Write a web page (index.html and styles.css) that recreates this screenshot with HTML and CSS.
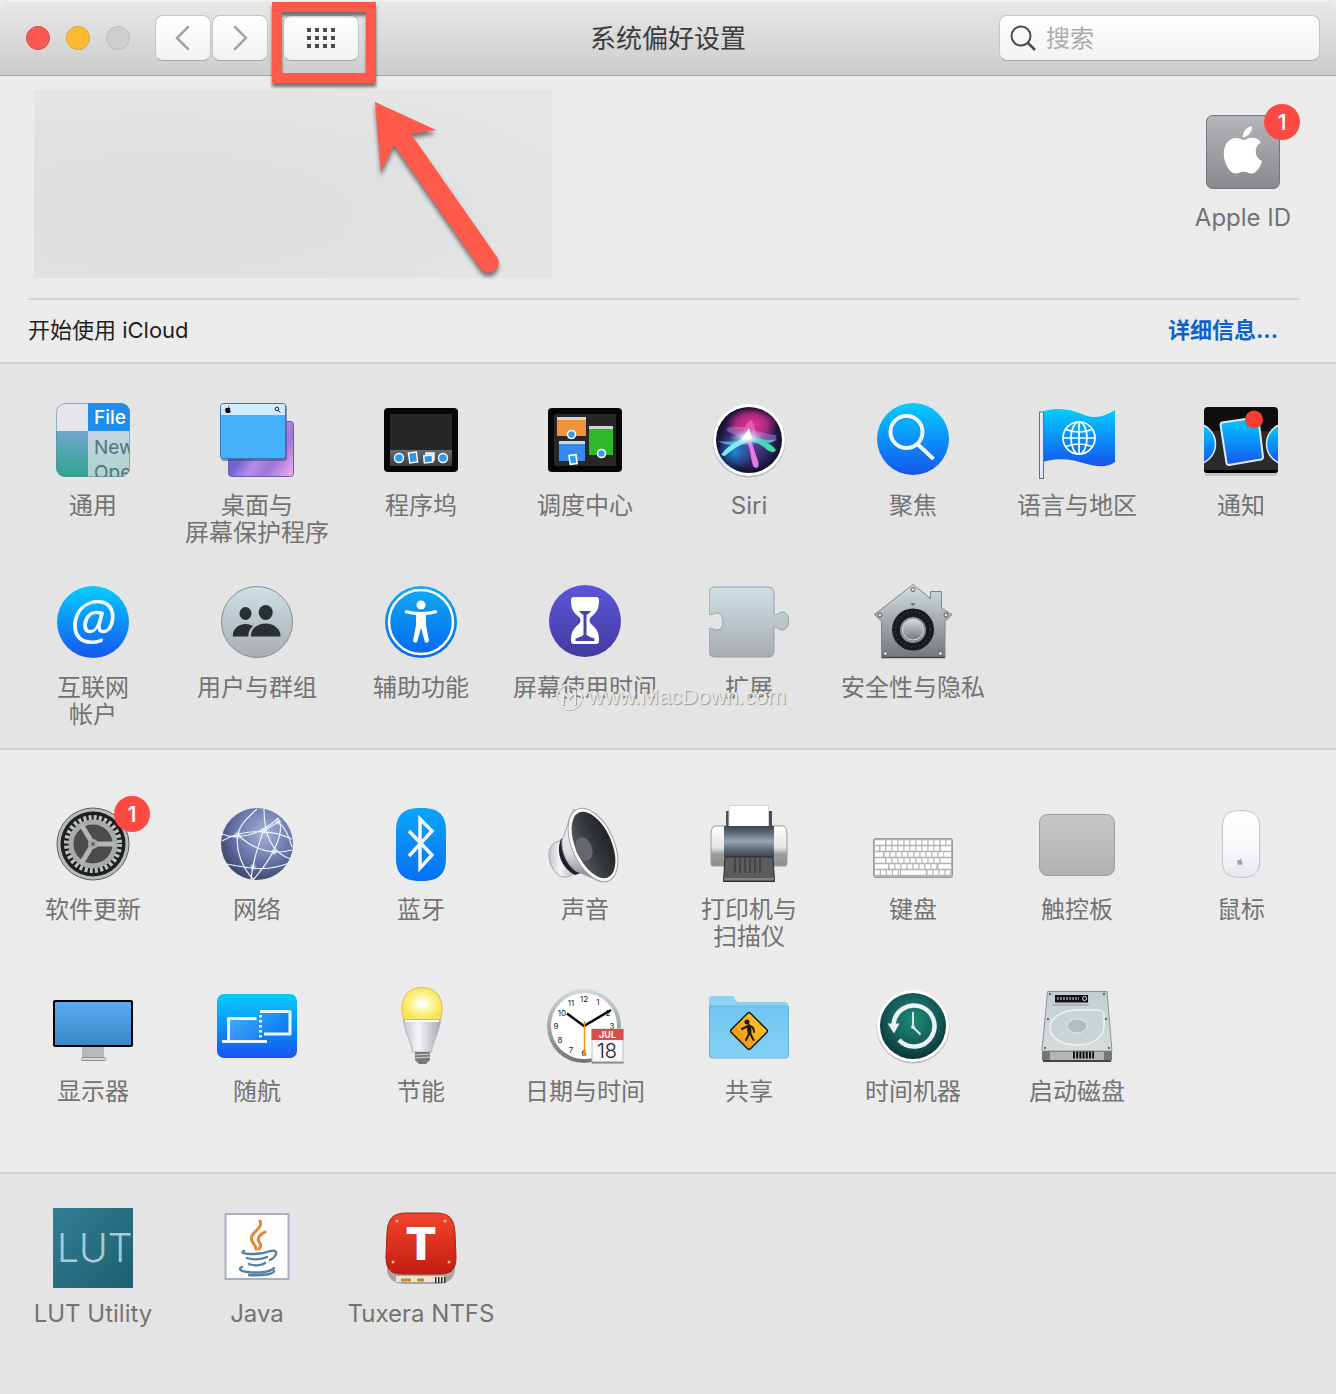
FILE: index.html
```html
<!DOCTYPE html>
<html lang="zh-CN">
<head>
    <meta charset="UTF-8">
    <meta name="viewport" content="width=device-width, initial-scale=1.0">
    <title>系统偏好设置</title>
    <link rel="stylesheet" href="styles.css">
</head>
<body>

    <!-- Shared gradients and symbols -->
    <svg class="defs" aria-hidden="true">
        <defs>
            <linearGradient id="blue" x1="0" y1="0" x2="0" y2="1">
                <stop offset="0" stop-color="#06cdfb"/>
                <stop offset="0.55" stop-color="#0b8cf8"/>
                <stop offset="1" stop-color="#1754ee"/>
            </linearGradient>
            <linearGradient id="silver" x1="0" y1="0" x2="0" y2="1">
                <stop offset="0" stop-color="#cfdfe4"/>
                <stop offset="1" stop-color="#a8adb0"/>
            </linearGradient>
            <linearGradient id="steel" x1="0" y1="0" x2="0" y2="1">
                <stop offset="0" stop-color="#d3dee1"/>
                <stop offset="1" stop-color="#757779"/>
            </linearGradient>
            <linearGradient id="white" x1="0" y1="0" x2="0" y2="1">
                <stop offset="0" stop-color="#ffffff"/>
                <stop offset="0.6" stop-color="#f8f8fc"/>
                <stop offset="1" stop-color="#e6e7ef"/>
            </linearGradient>
            <linearGradient id="sideGrey" x1="0" y1="0" x2="1" y2="0">
                <stop offset="0" stop-color="#c3c4cb"/>
                <stop offset="0.4" stop-color="#f4f5f8"/>
                <stop offset="1" stop-color="#a9aab1"/>
            </linearGradient>
            <symbol id="apple" viewBox="0 0 24 30">
                <path d="M17.6 0.2C17.8 3.9 15 7 11.9 7 11.7 3.6 14.5 0.6 17.6 0.2zM12.2 8.7C13.7 8.7 15.3 7.2 17.9 7.3 20.2 7.4 22.1 8.5 23.2 10.1 18.6 12.8 18.9 19.6 24 22 22.8 25.3 20.3 29.7 17.5 29.7 15.7 29.7 14.8 28.6 12.4 28.6 10 28.6 9.2 29.7 7.4 29.7 3.7 29.7 0 23.2 0 17.2 0 11 3.9 7.5 7.6 7.5 9.6 7.5 11.2 8.7 12.2 8.7z"/>
            </symbol>
        </defs>
    </svg>

    <header class="titlebar">
        <div class="titlebar-left">
            <div class="lights">
                <button class="light light-close" aria-label="关闭"></button>
                <button class="light light-min" aria-label="最小化"></button>
                <button class="light light-zoom" aria-label="缩放" disabled></button>
            </div>
            <nav class="tools">
                <button class="tool" aria-label="后退">
                    <svg width="20" height="28" viewBox="0 0 20 28"><path d="M15 3L4 14l11 11" fill="none" stroke="#a3a3a3" stroke-width="2.5" stroke-linecap="round"/></svg>
                </button>
                <button class="tool" aria-label="前进">
                    <svg width="20" height="28" viewBox="0 0 20 28"><path d="M5 3l11 11L5 25" fill="none" stroke="#a3a3a3" stroke-width="2.5" stroke-linecap="round"/></svg>
                </button>
            </nav>
            <button class="tool tool-all" aria-label="显示全部">
                <svg width="28" height="22" viewBox="0 0 28 22"><path d="M0 3h28M0 11h28M0 19h28" fill="none" stroke="#4b4b4b" stroke-width="4" stroke-dasharray="4 4"/></svg>
            </button>
        </div>
        <h1 class="title">系统偏好设置</h1>
        <label class="search">
            <svg width="26" height="26" viewBox="0 0 26 26"><circle cx="11" cy="11" r="9.5" fill="none" stroke="#4c4c4c" stroke-width="2"/><path d="M18 18l7 7" stroke="#4c4c4c" stroke-width="2.5"/></svg>
            <input type="search" placeholder="搜索" aria-label="搜索">
        </label>
    </header>

    <main>
        <section class="account">
            <div class="account-top">
                <div class="profile"></div>
                <a class="pref" href="#">
                    <span class="icon">
                        <svg viewBox="0 0 80 80">
                            <linearGradient id="idGrey" x1="0" y1="0" x2="0" y2="1"><stop offset="0" stop-color="#b5b6ba"/><stop offset="1" stop-color="#89888d"/></linearGradient>
                            <rect x="3.5" y="3.5" width="73" height="73" rx="6" fill="url(#idGrey)" stroke="#77777b"/>
                            <use href="#apple" x="20" y="14" width="40" height="48" fill="#fff"/>
                        </svg>
                        <span class="badge">1</span>
                    </span>
                    <span class="label">Apple ID</span>
                </a>
            </div>
            <div class="icloud">
                <span>开始使用 iCloud</span>
                <a class="details" href="#">详细信息...</a>
            </div>
        </section>

        <section class="group group-personal">
            <a class="pref" href="#">
                <span class="icon">
                    <svg viewBox="0 0 80 80">
                        <clipPath id="genClip"><rect x="3" y="3" width="74" height="74" rx="9"/></clipPath>
                        <linearGradient id="genTeal" x1="0" y1="0" x2="0" y2="1"><stop offset="0" stop-color="#72a4ce"/><stop offset="1" stop-color="#2ca68c"/></linearGradient>
                        <linearGradient id="genMenu" x1="0" y1="0" x2="0" y2="1"><stop offset="0" stop-color="#c5d6e4"/><stop offset="1" stop-color="#acd3cb"/></linearGradient>
                        <g clip-path="url(#genClip)">
                            <rect x="3" y="3" width="32" height="28" fill="#e4e6ec"/>
                            <rect x="3" y="31" width="32" height="46" fill="url(#genTeal)"/>
                            <rect x="35" y="3" width="42" height="28" fill="#1f8df0"/>
                            <rect x="35" y="31" width="42" height="46" fill="url(#genMenu)"/>
                            <text x="41" y="24" class="menu-text menu-file">File</text>
                            <text x="41" y="54" class="menu-text">New</text>
                            <text x="41" y="79" class="menu-text">Open</text>
                        </g>
                        <rect x="3.5" y="3.5" width="73" height="73" rx="9" fill="none" stroke="#5c8c94" stroke-opacity="0.6"/>
                    </svg>
                </span>
                <span class="label">通用</span>
            </a>
            <a class="pref" href="#">
                <span class="icon">
                    <svg viewBox="0 0 80 80">
                        <linearGradient id="deskPurple" x1="0" y1="0.3" x2="1" y2="0.9"><stop offset="0" stop-color="#7b6bd6"/><stop offset="0.3" stop-color="#7264cf"/><stop offset="0.5" stop-color="#b48be8"/><stop offset="0.7" stop-color="#9c76d8"/><stop offset="1" stop-color="#f0a5ee"/></linearGradient>
                        <rect x="11.5" y="21.5" width="65" height="55" rx="3" fill="url(#deskPurple)" stroke="#7258a8"/>
                        <rect x="4" y="5" width="66" height="56" rx="3" fill="#35407a" opacity="0.5"/>
                        <rect x="3.5" y="3.5" width="65" height="55" rx="3" fill="#47b0fc" stroke="#3b74a6"/>
                        <path d="M4 15V6q0-2 2-2h60q2 0 2 2v9z" fill="#d0ebfd"/>
                        <use href="#apple" x="8" y="6" width="6" height="7"/>
                        <circle cx="60" cy="9" r="1.8" fill="none" stroke="#222"/><path d="M61.3 10.3l2 2" stroke="#222"/>
                    </svg>
                </span>
                <span class="label">桌面与<br>屏幕保护程序</span>
            </a>
            <a class="pref" href="#">
                <span class="icon">
                    <svg viewBox="0 0 80 80">
                        <linearGradient id="dockBar" x1="0" y1="0" x2="0" y2="1"><stop offset="0" stop-color="#666b70"/><stop offset="1" stop-color="#3b3d40"/></linearGradient>
                        <rect x="3" y="8" width="74" height="64" rx="4" fill="#070707"/>
                        <rect x="9" y="14" width="62" height="52" fill="#272727"/>
                        <rect x="9" y="50" width="62" height="16" fill="url(#dockBar)"/>
                        <g fill="#2b97ec" stroke="#fff" stroke-width="1.4">
                            <circle cx="18" cy="58" r="4.5"/>
                            <rect x="28" y="52.5" width="8" height="10" transform="rotate(-8 32 57)"/>
                            <rect x="45" y="53" width="8" height="7" fill="#aacbe6"/>
                            <rect x="43" y="55.5" width="8.5" height="7" transform="rotate(-6 47 59)"/>
                            <circle cx="62" cy="58" r="4.5"/>
                        </g>
                    </svg>
                </span>
                <span class="label">程序坞</span>
            </a>
            <a class="pref" href="#">
                <span class="icon">
                    <svg viewBox="0 0 80 80">
                        <rect x="3" y="8" width="74" height="64" rx="4" fill="#070707"/>
                        <rect x="9" y="14" width="62" height="52" fill="#272727"/>
                        <rect x="12" y="17" width="29" height="19" fill="#f0923a"/><rect x="12" y="17" width="29" height="3" fill="#d7d3cf"/>
                        <rect x="14" y="41" width="26" height="20" fill="#3489ea"/><rect x="14" y="41" width="26" height="3" fill="#d0d6de"/>
                        <rect x="44" y="26" width="24" height="29" fill="#2db92b"/><rect x="44" y="26" width="24" height="3" fill="#cfd8cd"/>
                        <g fill="#2f9cec" stroke="#fff" stroke-width="1.6">
                            <circle cx="26.5" cy="34.5" r="4"/>
                            <circle cx="56.5" cy="53.5" r="4"/>
                            <rect x="24.5" y="55" width="7" height="9" transform="rotate(-8 28 59)"/>
                        </g>
                    </svg>
                </span>
                <span class="label">调度中心</span>
            </a>
            <a class="pref" href="#">
                <span class="icon">
                    <svg viewBox="0 0 80 80">
                        <radialGradient id="siriBase" cx="0.5" cy="0.5" r="0.5"><stop offset="0" stop-color="#6a4bb0"/><stop offset="0.7" stop-color="#2d2560"/><stop offset="1" stop-color="#130d2a"/></radialGradient>
                        <radialGradient id="siriPink" cx="0.5" cy="0.5" r="0.5"><stop offset="0" stop-color="#ee2f93"/><stop offset="0.6" stop-color="#d92a88" stop-opacity="0.7"/><stop offset="1" stop-color="#d02583" stop-opacity="0"/></radialGradient>
                        <radialGradient id="siriBlue" cx="0.5" cy="0.5" r="0.5"><stop offset="0" stop-color="#1c8fd6"/><stop offset="1" stop-color="#2064b2" stop-opacity="0"/></radialGradient>
                        <radialGradient id="siriGlow" cx="0.5" cy="0.5" r="0.5"><stop offset="0" stop-color="#fff"/><stop offset="0.3" stop-color="#d8f6ff" stop-opacity="0.8"/><stop offset="1" stop-color="#9fd8ff" stop-opacity="0"/></radialGradient>
                        <circle cx="40" cy="41" r="36.5" fill="#b9b9b9"/>
                        <circle cx="40" cy="40" r="36" fill="#fff"/>
                        <circle cx="40" cy="40" r="33" fill="url(#siriBase)"/>
                        <ellipse cx="43" cy="24" rx="26" ry="17" fill="url(#siriPink)"/>
                        <ellipse cx="26" cy="52" rx="19" ry="19" fill="url(#siriBlue)"/>
                        <path d="M17 29C30 22 44 32 67 35c2 4-4 8-12 7L39 38C29 36 20 34 17 29z" fill="#d99be8" opacity="0.4"/>
                        <path d="M33 38c1-9 4-15 9-18 5 6 6 14 3 22z" fill="#e878cf" opacity="0.6"/>
                        <path d="M9 41c14 2 24-1 34-3 10 0 17 4 25 1-5 6-17 4-24 3C32 45 18 47 9 41z" fill="#68d3ed" opacity="0.7"/>
                        <path d="M39 36C26 42 17 47 12 55l4 1c8-8 18-12 26-16z" fill="#7decf4"/>
                        <path d="M40 37c14 2 24 8 27 13-2 4-7 2-11-2-5-4-11-7-17-8z" fill="#3fdcb2"/>
                        <path d="M36 40c5 3 5 15 8 26 4 4 7 1 5-5-3-9-5-14-7-22z" fill="#e57ce4"/>
                        <ellipse cx="38" cy="38" rx="17" ry="8" fill="url(#siriGlow)"/>
                        <path d="M40 28l3 11-11 1z" fill="#fff"/>
                    </svg>
                </span>
                <span class="label">Siri</span>
            </a>
            <a class="pref" href="#">
                <span class="icon">
                    <svg viewBox="0 0 80 80">
                        <circle cx="40" cy="39" r="36" fill="url(#blue)"/>
                        <g fill="none" stroke="#1567c8" stroke-opacity="0.5"><circle cx="33.5" cy="33" r="16" stroke-width="4"/><path d="M45.5 46l15 14.5" stroke-width="4"/></g>
                        <g fill="none" stroke="#f0f5fb"><circle cx="33.5" cy="32" r="16" stroke-width="4"/><path d="M45 44.5L60.5 59" stroke-width="4"/></g>
                    </svg>
                </span>
                <span class="label">聚焦</span>
            </a>
            <a class="pref" href="#">
                <span class="icon">
                    <svg viewBox="0 0 80 80">
                        <rect x="2.5" y="12" width="4" height="66.5" fill="#e6ebf6" stroke="#5b6c9a"/>
                        <path d="M7 11C28 6 38 12 49 15.5S68 16 78 10v52c-8 6-19 4.500-30 1.500S25 57 7 61.500z" fill="url(#blue)"/>
                        <g fill="none" stroke="#fff" stroke-width="1.7"><circle cx="42" cy="38" r="16"/><ellipse cx="42" cy="38" rx="8" ry="16"/><path d="M42 22v32M26 38h32M29 29.5q13 5 26 0M29 46.5q13-5 26 0"/></g>
                    </svg>
                </span>
                <span class="label">语言与地区</span>
            </a>
            <a class="pref" href="#">
                <span class="icon">
                    <svg viewBox="0 0 80 80">
                        <clipPath id="noteClip"><rect x="3" y="7" width="74" height="66" rx="4"/></clipPath>
                        <rect x="3" y="9" width="74" height="67" rx="4" fill="#c3c3c3"/>
                        <g clip-path="url(#noteClip)">
                            <rect x="3" y="7" width="74" height="66" fill="#0e0e0e"/>
                            <rect x="3" y="31" width="74" height="42" fill="#2a2a2a"/>
                            <g fill="url(#blue)" stroke="#d9e8f3" stroke-width="1.6"><circle cx="-6" cy="44" r="20.5"/><circle cx="86" cy="44" r="20.5"/></g>
                            <path d="M3 71.5h74" stroke="#000" stroke-width="3"/>
                        </g>
                        <path d="M21 22.5l34-5q2 0 2.5 2L62 57q0 2-2 2.5L28 65q-2 0-2.5-2L19.5 25q0-2 1.5-2.5z" fill="url(#blue)" stroke="#e3e9f3" stroke-width="2"/>
                        <circle cx="53" cy="19.5" r="9" fill="#fb3c32"/>
                    </svg>
                </span>
                <span class="label">通知</span>
            </a>
            <a class="pref" href="#">
                <span class="icon">
                    <svg viewBox="0 0 80 80">
                        <circle cx="40" cy="40" r="36" fill="url(#blue)"/>
                        <text x="40" y="57" class="at-sign">@</text>
                    </svg>
                </span>
                <span class="label">互联网<br>帐户</span>
            </a>
            <a class="pref" href="#">
                <span class="icon">
                    <svg viewBox="0 0 80 80">
                        <circle cx="40" cy="40" r="35.5" fill="url(#silver)" stroke="#888d90"/>
                        <g fill="#2b2f33">
                            <ellipse cx="28.5" cy="31.5" rx="6" ry="6.5"/>
                            <path d="M16 54.5c-1-7 5-12.5 13-12.5 3 0 5 1 7 2-3 3-5 6-4.5 10.5z"/>
                            <ellipse cx="48.7" cy="30.5" rx="7" ry="7.5"/>
                            <path d="M34 54.5c-1-7 6-13 14.5-13S64 47.500 63.500 54.500z"/>
                        </g>
                    </svg>
                </span>
                <span class="label">用户与群组</span>
            </a>
            <a class="pref" href="#">
                <span class="icon">
                    <svg viewBox="0 0 80 80">
                        <linearGradient id="accBlue" x1="0" y1="0" x2="0" y2="1"><stop offset="0" stop-color="#11abf4"/><stop offset="1" stop-color="#0467ef"/></linearGradient>
                        <circle cx="40" cy="40" r="36" fill="url(#accBlue)"/>
                        <circle cx="40" cy="40" r="32" fill="none" stroke="#fff" stroke-width="2.5"/>
                        <g fill="#fff"><circle cx="40" cy="23" r="4.5"/>
                        <path d="M25 28c5 1 10 2 15 2s10-1 15-2q2 1 1 3-5 1.500-11 2v10l3 16q-2 3-4 1l-4-14-4 14q-2 2-4-1l3-16V33q-6-.5-11-2-1-2 1-3z"/></g>
                    </svg>
                </span>
                <span class="label">辅助功能</span>
            </a>
            <a class="pref" href="#">
                <span class="icon">
                    <svg viewBox="0 0 80 80">
                        <linearGradient id="timePurple" x1="0" y1="0" x2="0" y2="1"><stop offset="0" stop-color="#5d55d9"/><stop offset="1" stop-color="#433b9e"/></linearGradient>
                        <circle cx="40" cy="39" r="36" fill="url(#timePurple)"/>
                        <path d="M29 15h22q3 0 3 3c0 9-2 12-8 17q-3 3.5 0 7c6 5 8 8 8 17q0 3-3 3H29q-3 0-3-3c0-9 2-12 8-17q3-3.5 0-7c-6-5-8-8-8-17q0-3 3-3z" fill="#fff"/>
                        <path d="M34 29h12q-1 2-4.5 4v20q3 2 8 3.500v2.500h-19v-2.500q5-1.500 8-3.500V33Q35 31 34 29z" fill="#4a43ad"/>
                    </svg>
                </span>
                <span class="label">屏幕使用时间</span>
            </a>
            <a class="pref" href="#">
                <span class="icon">
                    <svg viewBox="0 0 80 80">
                        <path d="M6 5h53q6 0 6 6v21c4 2 4-2 8-2 9 0 9 18 0 18-4 0-4-4-8-2v23q0 6-6 6H6q-6 0-6-6V47c4-2 4 1 8 1 8 0 8-17 0-17-4 0-4 3-8 1V11q0-6 6-6z" fill="url(#silver)" stroke="#96a0a3"/>
                    </svg>
                </span>
                <span class="label">扩展</span>
            </a>
            <a class="pref" href="#">
                <span class="icon">
                    <svg viewBox="0 0 80 80">
                        <path d="M40 2.5l17.5 14V9.5h11V25l.5 1.5 10 6-7 7v36H8.5v-36l-7-7z" fill="url(#steel)" stroke="#7c8689"/>
                        <path d="M8.5 75.5h63.5" stroke="#444" stroke-width="1.5"/>
                        <g fill="#e2e6e7" stroke="#555a5c"><circle cx="40" cy="7.5" r="2"/><circle cx="7" cy="33" r="2"/><circle cx="73" cy="33" r="2"/><circle cx="12.5" cy="71.5" r="2"/><circle cx="67.5" cy="71.5" r="2"/></g>
                        <circle cx="40" cy="47.5" r="21" fill="#191a1b"/>
                        <circle cx="40" cy="47.5" r="17.5" fill="none" stroke="#3c3c3c" stroke-width="2" stroke-dasharray="1 3"/>
                        <circle cx="40" cy="48" r="13" fill="#8d8f91"/>
                        <circle cx="40" cy="47.5" r="10.5" fill="url(#steel)" stroke="#d3d5d6"/>
                        <path d="M37.5 21h5L40 24.5z" fill="#6f7779"/>
                    </svg>
                </span>
                <span class="label">安全性与隐私</span>
            </a>
        </section>

        <section class="group group-hardware">
            <a class="pref" href="#">
                <span class="icon">
                    <svg viewBox="0 0 80 80">
                        <circle cx="40" cy="40" r="36" fill="#b6bcbf" stroke="#5c5e60"/>
                        <circle cx="40" cy="40" r="32.5" fill="#1e1f20"/>
                        <circle cx="40" cy="40" r="26.5" fill="none" stroke="#bfc0c0" stroke-width="5" stroke-dasharray="3 2.2"/>
                        <circle cx="40" cy="40" r="22" fill="#4a4b4c" stroke="#a9aaaa" stroke-width="5"/>
                        <path d="M40 40h22M40 40L28.5 21M40 40L28.5 59" stroke="#b4b5b5" stroke-width="5"/>
                        <circle cx="40" cy="40" r="5" fill="#a9aaaa"/><circle cx="40" cy="40" r="2" fill="#666"/>
                    </svg>
                    <span class="badge">1</span>
                </span>
                <span class="label">软件更新</span>
            </a>
            <a class="pref" href="#">
                <span class="icon">
                    <svg viewBox="0 0 80 80">
                        <radialGradient id="netBlue" cx="0.6" cy="0.35" r="0.7"><stop offset="0" stop-color="#a6b3d8"/><stop offset="0.6" stop-color="#6472a5"/><stop offset="1" stop-color="#3c4165"/></radialGradient>
                        <radialGradient id="netNode"><stop offset="0" stop-color="#fff"/><stop offset="1" stop-color="#cfe2ff" stop-opacity="0"/></radialGradient>
                        <circle cx="40" cy="40" r="36" fill="url(#netBlue)"/>
                        <g fill="none" stroke="#edf2ff" stroke-width="1.2">
                            <path d="M5 30c14 6 38 2 56-16M5 37c17-10 44-14 70-2M21 31c16 15 35 20 54 15M21 31C18 45 25 64 37 76M46 27C42 42 36 53 34 76M40 5C29 15 22 22 21 31M47 5c0 17 3 43 27 50M61 14C68 25 60 49 36 76M10 60c16 3 38 9 62-1M47 27l14-9c8 6 12 17 14 25"/>
                        </g>
                        <g fill="url(#netNode)"><circle cx="21" cy="31" r="5"/><circle cx="47" cy="27" r="4"/><circle cx="61" cy="18" r="4"/><circle cx="36" cy="63" r="4"/><circle cx="57" cy="48" r="4"/></g>
                    </svg>
                </span>
                <span class="label">网络</span>
            </a>
            <a class="pref" href="#">
                <span class="icon">
                    <svg viewBox="0 0 80 80">
                        <linearGradient id="btBlue" x1="0" y1="0" x2="0" y2="1"><stop offset="0" stop-color="#0ba6f6"/><stop offset="1" stop-color="#0570f6"/></linearGradient>
                        <path d="M40 4c18 0 25 7 25 23v27c0 16-7 23-25 23S15 70 15 54V27C15 11 22 4 40 4z" fill="url(#btBlue)"/>
                        <path d="M28 27l23 24-12 13V15l12 12-23 25" fill="none" stroke="#f2f6fb" stroke-width="3.5"/>
                    </svg>
                </span>
                <span class="label">蓝牙</span>
            </a>
            <a class="pref" href="#">
                <span class="icon">
                    <svg viewBox="0 0 80 80">
                        <linearGradient id="spkDark" x1="0" y1="0" x2="1" y2="0"><stop offset="0" stop-color="#54575b"/><stop offset="0.5" stop-color="#34373b"/><stop offset="1" stop-color="#222427"/></linearGradient>
                        <linearGradient id="spkCone" x1="0" y1="0" x2="0" y2="1"><stop offset="0" stop-color="#fff"/><stop offset="0.6" stop-color="#dcdde1"/><stop offset="1" stop-color="#77787e"/></linearGradient>
                        <path d="M15 37C5 38 2 48 5 58s11 18 20 14l8-5-12-32z" fill="url(#sideGrey)" stroke="#a5a6ac"/>
                        <path d="M16 35c-5 12-1 28 14 36l6-2-12-36z" fill="#202123"/>
                        <path d="M29 5C23 14 22 26 17 36c-1 12 5 25 14 31 10 4 20 10 32 11z" fill="url(#spkCone)" stroke="#a1a2a7"/>
                        <ellipse cx="48" cy="41" rx="21" ry="39" transform="rotate(-24 48 41)" fill="#f8f8f9" stroke="#a1a2a7"/>
                        <ellipse cx="48.5" cy="41" rx="18" ry="35.5" transform="rotate(-24 48.5 41)" fill="url(#spkDark)"/>
                        <ellipse cx="39" cy="45" rx="8" ry="12" transform="rotate(-20 39 45)" fill="#66686d"/>
                    </svg>
                </span>
                <span class="label">声音</span>
            </a>
            <a class="pref" href="#">
                <span class="icon">
                    <svg viewBox="0 0 80 80">
                        <linearGradient id="prnBlue" x1="0" y1="0" x2="0" y2="1"><stop offset="0" stop-color="#3d4650"/><stop offset="0.2" stop-color="#586574"/><stop offset="0.5" stop-color="#96a4b3"/><stop offset="0.8" stop-color="#59636f"/><stop offset="1" stop-color="#3b434b"/></linearGradient>
                        <linearGradient id="prnSide" x1="0" y1="0" x2="0" y2="1"><stop offset="0" stop-color="#fff"/><stop offset="0.55" stop-color="#e4e4e4"/><stop offset="0.7" stop-color="#9d9d9d"/><stop offset="1" stop-color="#8e8e8e"/></linearGradient>
                        <rect x="17" y="7" width="46" height="18" fill="#4c4e50"/>
                        <rect x="20" y="1.5" width="39.5" height="22" fill="#fff" stroke="#d5d5d5"/>
                        <path d="M5 22h12v40H4q-2 0-2-3V33q0-9 3-11zM75 22H63v40h13q2 0 2-3V33q0-9-3-11z" fill="url(#prnSide)" stroke="#999"/>
                        <path d="M15 22h50v31H15z" fill="url(#prnBlue)"/>
                        <path d="M16 53h48l1.5 24.5h-51z" fill="#5b5c5d" stroke="#2b2b2b"/>
                        <path d="M26 54v15M31 54v15M36 54v15M41 54v15M46 54v15M51 54v15" stroke="#444" stroke-width="2"/>
                        <path d="M15 75h50" stroke="#838383" stroke-width="2"/>
                    </svg>
                </span>
                <span class="label">打印机与<br>扫描仪</span>
            </a>
            <a class="pref" href="#">
                <span class="icon">
                    <svg viewBox="0 0 80 80">
                        <rect x="0.5" y="34.5" width="79" height="39" rx="2" fill="#b3b3b3" stroke="#9b9b9b"/>
                        <g fill="none" stroke="#fff" stroke-width="4.6">
                            <path d="M2 38.5h10M73.5 38.5H78M2 44.5h4M68 44.5h10M2 50.5h8M71 50.5h7M2 56.5h10M67.5 56.5H78M2 62.5h13M65.5 62.5H78M28 68.5h25"/>
                            <path d="M13.5 38.5h59M7.500 44.500h59M11.500 50.500h59M13.500 56.500h53M16.500 62.500h48M2 68.500h25M54.500 68.500H78" stroke-dasharray="4.8 1.2"/>
                        </g>
                    </svg>
                </span>
                <span class="label">键盘</span>
            </a>
            <a class="pref" href="#">
                <span class="icon">
                    <svg viewBox="0 0 80 80">
                        <linearGradient id="padGrey" x1="0" y1="0" x2="0" y2="1"><stop offset="0" stop-color="#c7c7c7"/><stop offset="1" stop-color="#b1b1b1"/></linearGradient>
                        <rect x="2.5" y="10.5" width="75" height="61" rx="8" fill="url(#padGrey)" stroke="#9d9d9d"/>
                    </svg>
                </span>
                <span class="label">触控板</span>
            </a>
            <a class="pref" href="#">
                <span class="icon">
                    <svg viewBox="0 0 80 80">
                        <path d="M40 6.5c14 0 18 6 18.5 15v37C58 68 54 73.5 40 73.5S22 68 21.5 58.5v-37C22 12 26 6.5 40 6.5z" fill="url(#white)" stroke="#c4c4c6"/>
                        <use href="#apple" x="36" y="54" width="6" height="7" fill="#a5a5a9"/>
                    </svg>
                </span>
                <span class="label">鼠标</span>
            </a>
            <a class="pref" href="#">
                <span class="icon">
                    <svg viewBox="0 0 80 80">
                        <linearGradient id="dispBlue" x1="0" y1="0" x2="0" y2="1"><stop offset="0" stop-color="#5aadf0"/><stop offset="1" stop-color="#3a86c6"/></linearGradient>
                        <rect x="29" y="60" width="22" height="12" fill="#b9b9bc"/>
                        <rect x="28.5" y="71.5" width="24" height="3" rx="1" fill="#d8d8da" stroke="#8f8f92"/>
                        <rect x="1" y="15" width="78" height="45" rx="1" fill="url(#dispBlue)" stroke="#000" stroke-width="2"/>
                    </svg>
                </span>
                <span class="label">显示器</span>
            </a>
            <a class="pref" href="#">
                <span class="icon">
                    <svg viewBox="0 0 80 80">
                        <linearGradient id="screenGlow" x1="0" y1="0" x2="1" y2="0.3"><stop offset="0" stop-color="#5cb4fa"/><stop offset="1" stop-color="#1176f3"/></linearGradient>
                        <rect x="0" y="8" width="80" height="64" rx="7" fill="url(#blue)"/>
                        <path d="M11 33h32v22H11zM43 26h30v22H43z" fill="url(#screenGlow)" opacity="0.7"/>
                        <g fill="none" stroke="#eaf6fe" stroke-width="3" stroke-linejoin="round">
                            <path d="M11.5 55V32.5h28M5 55.500h45M43 25.500h30v22.500H47"/>
                            <path d="M43.5 29v25" stroke-dasharray="2.5 2.5"/>
                        </g>
                    </svg>
                </span>
                <span class="label">随航</span>
            </a>
            <a class="pref" href="#">
                <span class="icon">
                    <svg viewBox="0 0 80 80">
                        <radialGradient id="bulb"><stop offset="0.1" stop-color="#fff"/><stop offset="0.5" stop-color="#fdf69b"/><stop offset="1" stop-color="#f6e654"/></radialGradient>
                        <path d="M22.5 33.5C17 14 26 1.5 41 1.5S65 14 59.5 33.5z" fill="url(#bulb)" stroke="#e3b560"/>
                        <path d="M22.5 34h37c-1 12-8 22-9 32h-19c-1-10-8-20-9-32z" fill="url(#sideGrey)" stroke="#b3b4ba"/>
                        <path d="M24 35h34" stroke="#f7f8fb" stroke-width="2"/>
                        <path d="M34 66h15v8l-4 4h-7l-4-4z" fill="#77797c"/>
                        <path d="M33 69l17-1M33 72l17-1" stroke="#d7d7d7"/>
                    </svg>
                </span>
                <span class="label">节能</span>
            </a>
            <a class="pref" href="#">
                <span class="icon">
                    <svg viewBox="0 0 80 80">
                        <linearGradient id="clockRim" x1="0" y1="0" x2="0" y2="1"><stop offset="0" stop-color="#d1dbdf"/><stop offset="1" stop-color="#717476"/></linearGradient>
                        <circle cx="39" cy="40" r="37" fill="url(#clockRim)"/>
                        <circle cx="39" cy="40" r="33" fill="#fff"/>
                        <g class="clock-num">
                            <text x="39" y="16">12</text><text x="53" y="19">1</text><text x="63" y="30">2</text><text x="67" y="43">3</text><text x="39" y="70">6</text>
                            <text x="26" y="67">7</text><text x="15" y="57">8</text><text x="11" y="43">9</text><text x="17" y="30">10</text><text x="26" y="20">11</text>
                        </g>
                        <path d="M22 27.5L39 40l27-16" fill="none" stroke="#000" stroke-width="2.5"/>
                        <path d="M39.5 35v35" stroke="#e8991c" stroke-width="1.5"/>
                        <rect x="47" y="43" width="31" height="34" fill="#f7f7f7" stroke="#c4c4c4"/>
                        <rect x="46.5" y="43" width="32" height="11" fill="#df4b49"/>
                        <path d="M47 76.5h31.5" stroke="#8e8e8e" stroke-width="2"/>
                        <text x="62.5" y="52" class="cal-month">JUL</text>
                        <text x="62" y="72" class="cal-day">18</text>
                    </svg>
                </span>
                <span class="label">日期与时间</span>
            </a>
            <a class="pref" href="#">
                <span class="icon">
                    <svg viewBox="0 0 80 80">
                        <linearGradient id="folder" x1="0" y1="0" x2="0" y2="1"><stop offset="0" stop-color="#70c5f1"/><stop offset="1" stop-color="#84d0f5"/></linearGradient>
                        <linearGradient id="sign" x1="0" y1="0" x2="0" y2="1"><stop offset="0" stop-color="#fdbf27"/><stop offset="1" stop-color="#f09b17"/></linearGradient>
                        <path d="M3 10h20c3 0 3 6 7 6h46q3 0 3 3v50q0 3-3 3H3q-3 0-3-3V13q0-3 3-3z" fill="#8fd2f2"/>
                        <path d="M.5 20h79v49q0 3-3 3h-73q-3 0-3-3z" fill="url(#folder)" stroke="#68b5dc"/>
                        <rect x="26.5" y="31.5" width="27" height="27" rx="2" transform="rotate(45 40 45)" fill="url(#sign)" stroke="#1d1b17" stroke-width="1.5"/>
                        <circle cx="38" cy="36" r="2.5" fill="#1d1b17"/>
                        <path d="M40 39l1 7-4 8M40.5 46l4 8M39 40l-6 3M41 40q4 1 4 6" fill="none" stroke="#1d1b17" stroke-width="2" stroke-linecap="round"/>
                        <path d="M40 40l.5 7" stroke="#1d1b17" stroke-width="4"/>
                    </svg>
                </span>
                <span class="label">共享</span>
            </a>
            <a class="pref" href="#">
                <span class="icon">
                    <svg viewBox="0 0 80 80">
                        <radialGradient id="tmGreen" cx="0.5" cy="0.4" r="0.6"><stop offset="0" stop-color="#1d8c7c"/><stop offset="0.6" stop-color="#155f59"/><stop offset="1" stop-color="#0c3438"/></radialGradient>
                        <circle cx="40" cy="41" r="36.5" fill="#bcbcbc"/>
                        <circle cx="40" cy="40" r="36" fill="#fff"/>
                        <circle cx="40" cy="40" r="33" fill="url(#tmGreen)"/>
                        <path d="M20.5 39A20.5 20.5 0 1 1 26 54" fill="none" stroke="#eaf3f2" stroke-width="4.5"/>
                        <path d="M14.5 37.5h12l-5.5 10z" fill="#eaf3f2"/>
                        <path d="M40 26v15l7.5 7.5" fill="none" stroke="#d6e7e4" stroke-width="2"/>
                        <circle cx="40" cy="41" r="2" fill="#d6e7e4"/>
                    </svg>
                </span>
                <span class="label">时间机器</span>
            </a>
            <a class="pref" href="#">
                <span class="icon">
                    <svg viewBox="0 0 80 80">
                        <linearGradient id="disk" x1="0" y1="0" x2="0" y2="1"><stop offset="0" stop-color="#c3cdd0"/><stop offset="1" stop-color="#d7dcdd"/></linearGradient>
                        <path d="M5 64h70v9q0 2-2 2H7q-2 0-2-2z" fill="#747677"/>
                        <path d="M13 66h54v8H13z" fill="#b5b5b4"/>
                        <path d="M10.5 5.5h59.5L75 65H5z" fill="url(#disk)" stroke="#8c9496"/>
                        <path d="M18 9h33v7.5H18z" fill="#121212"/>
                        <path d="M20 12.5h22" stroke="#777" stroke-width="3" stroke-dasharray="2 1"/><circle cx="47.5" cy="12.5" r="2" fill="none" stroke="#ddd"/>
                        <path d="M16 19h36" stroke="#8f9799"/>
                        <path d="M40 24h22q5 0 5 6v10c0 12-12 19-27 19S13 52 13 42s12-18 27-18z" fill="#ccd3d5" stroke="#eef2f3" stroke-width="1.5"/>
                        <ellipse cx="40" cy="40" rx="10" ry="7" fill="#b5bdc0" stroke="#e5eaeb"/>
                        <g fill="#3b3f40"><circle cx="13" cy="8" r="1"/><circle cx="67" cy="8" r="1"/><circle cx="11" cy="33" r="1"/><circle cx="69" cy="33" r="1"/><circle cx="8" cy="62" r="1"/><circle cx="72" cy="62" r="1"/></g>
                        <path d="M36 69h21" stroke="#111" stroke-width="7" stroke-dasharray="2 1.2"/>
                        <path d="M6 75h68" stroke="#414344" stroke-width="2"/>
                    </svg>
                </span>
                <span class="label">启动磁盘</span>
            </a>
        </section>

        <section class="group group-other">
            <a class="pref" href="#">
                <span class="icon">
                    <svg viewBox="0 0 80 80">
                        <linearGradient id="lut" x1="0" y1="0" x2="1" y2="1"><stop offset="0" stop-color="#337e93"/><stop offset="1" stop-color="#1e5e70"/></linearGradient>
                        <rect width="80" height="80" fill="url(#lut)"/>
                        <text x="4" y="54" class="lut-text">LUT</text>
                    </svg>
                </span>
                <span class="label">LUT Utility</span>
            </a>
            <a class="pref" href="#">
                <span class="icon">
                    <svg viewBox="0 0 80 80">
                        <rect x="8.5" y="6" width="63" height="65" fill="#fdfdfd" stroke="#a6b2c2" stroke-width="2"/>
                        <g fill="none" stroke="#e08a35" stroke-width="3" stroke-linecap="round"><path d="M43 13c4 8-12 12-8 20 1 3 4 4 4 8"/><path d="M48 24c-6 3-9 7-5 11 1 2 1 4-1 6"/></g>
                        <g fill="none" stroke="#58809f" stroke-width="2.4" stroke-linecap="round"><path d="M27 43c-7 3 14 5 26 0M30 50c5 2 14 2 20-1M32 56c5 2 12 2 16-1M54 43c7-2 7 5-1 9M25 59c-11 5 24 9 32 1M32 67c14 1 25-1 25-4"/></g>
                    </svg>
                </span>
                <span class="label">Java</span>
            </a>
            <a class="pref" href="#">
                <span class="icon">
                    <svg viewBox="0 0 80 80">
                        <linearGradient id="tux" x1="0" y1="0" x2="0" y2="1"><stop offset="0" stop-color="#f0452d"/><stop offset="1" stop-color="#c51c10"/></linearGradient>
                        <path d="M8 48h64l2 14q-2 14-18 14H24Q8 76 6 62z" fill="#a7a39f"/>
                        <path d="M15 71h48" stroke="#eee4d1" stroke-width="6"/>
                        <path d="M20 72h10M36 72h7" stroke="#c58d28" stroke-width="3"/>
                        <path d="M54 72h12" stroke="#333" stroke-width="6" stroke-dasharray="1.5 1.5"/>
                        <path d="M26 5h28c15 0 19 6 20 20l1 24c0 13-5 17-17 17H22C10 66 5 62 5 49l1-24C7 11 11 5 26 5z" fill="url(#tux)" stroke="#a82117"/>
                        <text x="40" y="51" class="tux-text">T</text>
                        <g fill="#f5b5a4"><circle cx="16" cy="13" r="1.5"/><circle cx="64" cy="13" r="1.5"/><circle cx="12" cy="54" r="1.5"/><circle cx="68" cy="54" r="1.5"/></g>
                    </svg>
                </span>
                <span class="label">Tuxera NTFS</span>
            </a>
        </section>
    </main>

    <!-- Annotation over the window -->
    <div class="highlight"></div>
    <svg class="arrow" width="140" height="190" viewBox="0 0 140 190" aria-hidden="true">
        <path d="M5 2L66 30L41 34L127 157A10 10 0 0 1 110 168L24 45L11 72z" fill="#ff594b"/>
    </svg>
    <div class="watermark">
        <svg width="30" height="30" viewBox="0 0 30 30"><g fill="none" stroke-width="2"><g stroke="#a2a2a2"><circle cx="15.5" cy="15.5" r="12.5"/><path d="M10 24V11l6 6 6-6v13"/></g><g stroke="#e8e8e8"><circle cx="15" cy="15" r="12.5"/><path d="M9 23V10l6 6 6-6v13"/></g></g></svg>
        <span>www.MacDown.com</span>
    </div>

</body>
</html>
```
FILE: styles.css
```css
* {
    box-sizing: border-box;
}
body {
    font-family: Inter, "Noto Sans CJK SC", sans-serif;
    margin: 0;
    min-height: 100vh;
    display: flex;
    flex-direction: column;
    position: relative;
    background-color: #ebebeb;
    color: #1f1f1f;
}
a {
    text-decoration: none;
}
.defs {
    position: absolute;
    width: 0;
    height: 0;
}

/* Title bar */
.titlebar {
    display: grid;
    grid-template-columns: 1fr auto 1fr;
    align-items: center;
    height: 76px;
    padding: 0 16px;
    background: linear-gradient(#e8e8e8, #cccccc);
    border-top: 1px solid #f3f3f3;
    border-bottom: 1px solid #a9a9a9;
    border-radius: 10px 10px 0 0;
}
.titlebar-left {
    display: flex;
    align-items: center;
    padding-left: 10px;
}
.lights {
    display: flex;
    gap: 16px;
    margin-right: 25px;
}
.light {
    width: 24px;
    height: 24px;
    padding: 0;
    border-radius: 50%;
    border: 1px solid #bcbcbc;
    background-color: #cfcfcf;
}
.light-close {
    background-color: #fc5753;
    border-color: #df4744;
}
.light-min {
    background-color: #fdbc2e;
    border-color: #dea034;
}
.tools {
    display: flex;
    gap: 1px;
    margin-right: 15px;
}
.tool {
    display: flex;
    align-items: center;
    justify-content: center;
    width: 56px;
    height: 46px;
    padding: 0;
    border: 1px solid #c6c6c6;
    border-bottom-color: #a8a8a8;
    border-radius: 8px;
    background: linear-gradient(#ffffff, #f2f2f2);
}
.tool-all {
    width: 76px;
}
.title {
    margin: 0;
    padding-top: 2px;
    font-size: 26px;
    line-height: 32px;
    font-weight: 400;
    color: #3c3c3c;
}
.search {
    display: flex;
    align-items: center;
    gap: 10px;
    justify-self: end;
    width: 321px;
    height: 46px;
    padding: 0 10px;
    border: 1px solid #c6c6c6;
    border-bottom-color: #a8a8a8;
    border-radius: 8px;
    background: linear-gradient(#ffffff, #f2f2f2);
}
.search input {
    flex: 1;
    min-width: 0;
    padding: 0;
    border: none;
    outline: none;
    background: none;
    font: inherit;
    font-size: 24px;
}
.search input::placeholder {
    color: #ababab;
}

/* Main panes */
main {
    flex: 1;
    display: flex;
    flex-direction: column;
}
.account {
    padding: 14px 36px 0 28px;
}
.account-top {
    display: flex;
    justify-content: space-between;
    padding-bottom: 20px;
    border-bottom: 2px solid #d4d4d4;
}
.profile {
    width: 518px;
    height: 188px;
    margin-left: 6px;
    background: radial-gradient(ellipse at 25% 65%, #dcdee0 0%, #dfe0e2 35%, #e5e5e5 80%);
}
.account .pref {
    width: 114px;
    padding-top: 22px;
}
.icloud {
    display: flex;
    justify-content: space-between;
    align-items: center;
    height: 62px;
    padding: 0 22px 6px 0;
    font-size: 22px;
}
.details {
    color: #0f62cc;
    font-weight: 700;
}
.group {
    display: grid;
    grid-template-columns: repeat(8, 1fr);
    grid-auto-rows: minmax(146px, auto);
    row-gap: 36px;
    align-content: start;
    border-top: 2px solid #d2d2d2;
}
.group-personal {
    padding: 36px 13px 20px 11px;
    background-color: #e4e4e4;
}
.group-hardware {
    padding: 54px 13px 40px 11px;
}
.group-other {
    flex: 1;
    padding: 34px 13px 0 11px;
    background-color: #e4e4e4;
}
.pref {
    display: flex;
    flex-direction: column;
    align-items: center;
    gap: 12px;
    color: #737373;
    text-align: center;
}
.icon {
    position: relative;
    width: 80px;
    height: 80px;
}
.icon svg {
    display: block;
    width: 80px;
    height: 80px;
}
.label {
    font-size: 24px;
    line-height: 27px;
    white-space: nowrap;
}
.badge {
    position: absolute;
    top: -8px;
    right: -17px;
    width: 36px;
    height: 36px;
    border-radius: 50%;
    background-color: #fc4a42;
    color: #fff;
    font-size: 22px;
    line-height: 36px;
    font-weight: 500;
}

/* Text inside icons */
.menu-text {
    font-size: 19px;
    fill: #56717b;
}
.menu-file {
    font-weight: 500;
    fill: #fff;
}
.at-sign {
    font-family: "Open Sans", sans-serif;
    font-size: 54px;
    font-style: italic;
    font-weight: 500;
    fill: #f3f8fe;
    text-anchor: middle;
}
.clock-num {
    font-size: 8px;
    fill: #222;
    text-anchor: middle;
}
.cal-month {
    font-size: 9px;
    font-weight: 700;
    fill: #fff;
    text-anchor: middle;
}
.cal-day {
    font-size: 20px;
    font-weight: 300;
    fill: #222;
    text-anchor: middle;
}
.lut-text {
    font-size: 39px;
    font-weight: 300;
    fill: #a9cad2;
}
.tux-text {
    font-family: "Liberation Sans", sans-serif;
    font-size: 45px;
    font-weight: 700;
    fill: #fff;
    stroke: #fff;
    stroke-width: 2;
    text-anchor: middle;
}

/* Annotation */
.highlight {
    position: absolute;
    top: 2px;
    left: 272px;
    width: 104px;
    height: 81px;
    border: 10px solid #ff594b;
    box-shadow: 0 4px 3px rgba(0, 0, 0, 0.5), inset 0 4px 3px rgba(0, 0, 0, 0.5);
}
.arrow {
    position: absolute;
    top: 100px;
    left: 370px;
    filter: drop-shadow(0 4px 2px rgba(0, 0, 0, 0.5));
}
.watermark {
    position: absolute;
    top: 682px;
    left: 554px;
    display: flex;
    align-items: center;
    gap: 4px;
    font-family: "Liberation Sans", Arial, sans-serif;
    font-size: 22px;
    line-height: 30px;
    color: #e8e8e8;
    text-shadow: 1px 1px 1px #999;
}
```
